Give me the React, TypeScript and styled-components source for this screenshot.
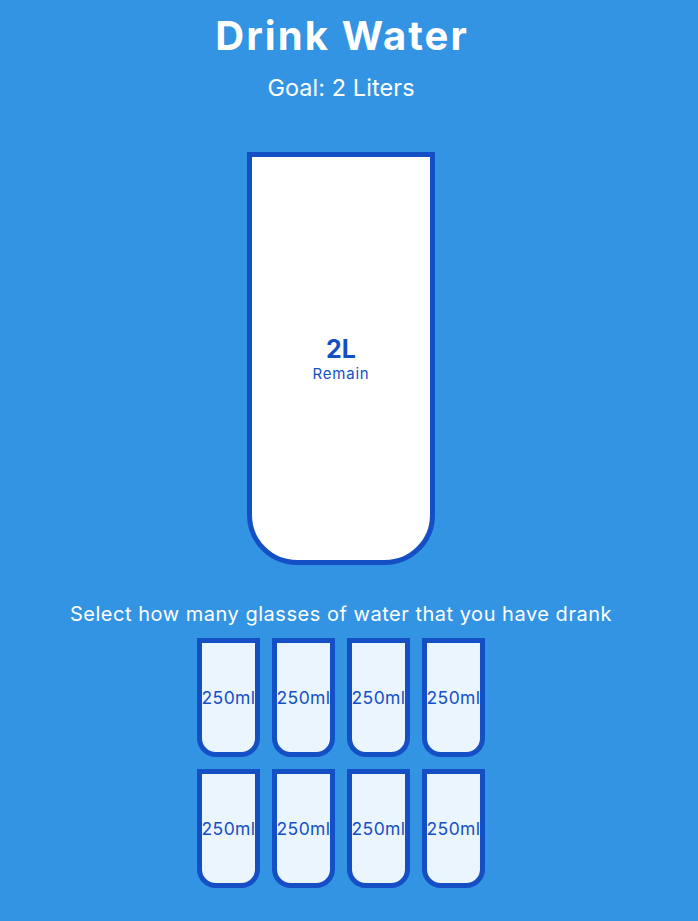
import React from "react";
import styled, { createGlobalStyle } from "styled-components";

const GlobalStyle = createGlobalStyle`
  * { box-sizing: border-box; }
  html, body {
    margin: 0;
    padding: 0;
    background-color: #3494e4;
  }
  body {
    color: #fff;
    font-family: Inter, "Open Sans", "DejaVu Sans", sans-serif;
  }
`;

const Page = styled.div`
  width: 682px;
  display: flex;
  flex-direction: column;
  align-items: center;
  padding: 12px 0 50px;
`;

const Title = styled.h1`
  margin: 0;
  font-size: 40px;
  line-height: 48px;
  font-weight: 700;
  letter-spacing: 2.1px;
  text-indent: 2.1px;
`;

const Goal = styled.h3`
  margin: 13.5px 0 0;
  font-size: 23.4px;
  line-height: 28px;
  font-weight: 400;
  letter-spacing: 0.1px;
`;

const BigCup = styled.div`
  margin-top: 50.5px;
  width: 187.5px;
  height: 412.5px;
  background-color: #fff;
  border: 5px solid #144fc6;
  border-radius: 0 0 50px 50px;
  color: #144fc6;
  display: flex;
  flex-direction: column;
  overflow: hidden;
`;

const Remained = styled.div`
  flex: 1;
  display: flex;
  flex-direction: column;
  align-items: center;
  justify-content: center;
  text-align: center;
`;

const Amount = styled.span`
  font-size: 25px;
  font-weight: 700;
  line-height: 30px;
`;

const Label = styled.small`
  font-size: 15px;
  line-height: 19px;
  letter-spacing: 0.8px;
`;

const Hint = styled.p`
  margin: 37px 0 6.25px;
  font-size: 20px;
  line-height: 24px;
  text-align: center;
  letter-spacing: 0.52px;
`;

const Cups = styled.div`
  width: 350px;
  display: flex;
  flex-wrap: wrap;
  align-items: center;
  justify-content: center;
`;

const SmallCup = styled.div`
  width: 62.5px;
  height: 118.75px;
  margin: 6.25px;
  background-color: rgba(255, 255, 255, 0.9);
  border: 5px solid #144fc6;
  border-radius: 0 0 18.75px 18.75px;
  color: #144fc6;
  font-size: 17.5px;
  letter-spacing: 0.4px;
  display: flex;
  align-items: center;
  justify-content: center;
  text-align: center;
  cursor: pointer;
`;

export default function App() {
  const cups = Array.from({ length: 8 });
  return (
    <>
      <GlobalStyle />
      <Page>
        <Title>Drink Water</Title>
        <Goal>Goal: 2 Liters</Goal>
        <BigCup>
          <Remained>
            <Amount>2L</Amount>
            <Label>Remain</Label>
          </Remained>
        </BigCup>
        <Hint>Select how many glasses of water that you have drank</Hint>
        <Cups>
          {cups.map((_, i) => (
            <SmallCup key={i}>250ml</SmallCup>
          ))}
        </Cups>
      </Page>
    </>
  );
}
